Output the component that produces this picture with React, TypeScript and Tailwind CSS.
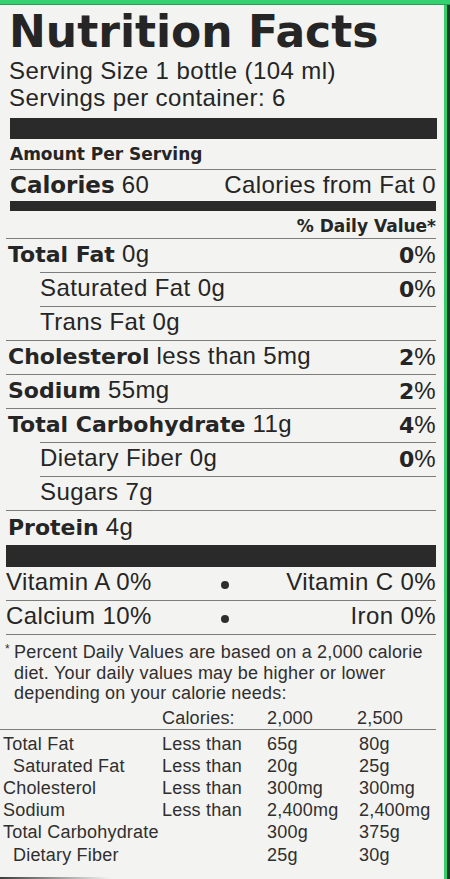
import React from 'react';

const sans = "font-['Liberation_Sans',Arial,sans-serif] tracking-[0.4px]";
const heavy = "font-['DejaVu_Sans',Verdana,sans-serif] font-bold tracking-normal";

type Nutrient = {
  label: string;
  amount: string;
  dv?: string;
  indent?: boolean;
  rule: 'full' | 'indent' | 'none';
};

const nutrients: Nutrient[] = [
  { label: 'Total Fat', amount: '0g', dv: '0', rule: 'indent' },
  { label: 'Saturated Fat', amount: '0g', dv: '0', indent: true, rule: 'indent' },
  { label: 'Trans Fat', amount: '0g', indent: true, rule: 'full' },
  { label: 'Cholesterol', amount: 'less than 5mg', dv: '2', rule: 'full' },
  { label: 'Sodium', amount: '55mg', dv: '2', rule: 'full' },
  { label: 'Total Carbohydrate', amount: '11g', dv: '4', rule: 'indent' },
  { label: 'Dietary Fiber', amount: '0g', dv: '0', indent: true, rule: 'indent' },
  { label: 'Sugars', amount: '7g', indent: true, rule: 'full' },
  { label: 'Protein', amount: '4g', rule: 'none' },
];

const limits = [
  { name: 'Total Fat', less: 'Less than', a: '65g', b: '80g' },
  { name: 'Saturated Fat', less: 'Less than', a: '20g', b: '25g', sub: true },
  { name: 'Cholesterol', less: 'Less than', a: '300mg', b: '300mg' },
  { name: 'Sodium', less: 'Less than', a: '2,400mg', b: '2,400mg' },
  { name: 'Total Carbohydrate', less: '', a: '300g', b: '375g' },
  { name: 'Dietary Fiber', less: '', a: '25g', b: '30g', sub: true },
];

function NutrientRow({ n }: { n: Nutrient }) {
  return (
    <div className="flex h-[34px] flex-col">
      <div className={`flex flex-1 items-center justify-between pb-[3px] ${n.indent ? 'pl-[34px]' : 'pl-[2px]'}`}>
        <p className={`${sans} text-[24px] leading-none`}>
          {n.indent ? n.label : <span className={`${heavy} text-[22px]`}>{n.label}</span>} {n.amount}
        </p>
        {n.dv && (
          <p className="text-[24px] leading-none">
            <span className={`${heavy} text-[22px]`}>{n.dv}</span>
            <span className={sans}>%</span>
          </p>
        )}
      </div>
      {n.rule !== 'none' && (
        <div className={`h-px bg-[#7c7c7c] ${n.rule === 'indent' ? 'ml-[34px]' : ''}`} />
      )}
    </div>
  );
}

function VitaminRow({ left, right }: { left: string; right: string }) {
  return (
    <div className="flex h-[34px] flex-col">
      <div className={`${sans} grid flex-1 grid-cols-[215px_12px_1fr] items-center pb-[4px] text-[24px] leading-none`}>
        <span>{left}</span>
        <span className="mt-[6px] h-[8px] w-[8px] rounded-full bg-[#2e2e2e]" />
        <span className="text-right">{right}</span>
      </div>
      <div className="h-px bg-[#7c7c7c]" />
    </div>
  );
}

export default function App() {
  return (
    <div className="flex h-[879px] w-[450px] flex-col overflow-hidden bg-[#f3f3f1] text-[#252525]">
      <div className="h-[4px] bg-[#35d06f]" />
      <div className="h-px bg-[#23a052]" />
      <div className="flex flex-1">
        <main className="flex flex-1 flex-col pr-[8px]">
          <section className="pl-[10px]">
            <h1 className={`${heavy} mt-[5px] -ml-[1px] text-[44px] leading-[44px]`}>Nutrition Facts</h1>
            <div className={`${sans} mt-[3px] -ml-[1px] text-[24px] leading-[27px]`}>
              <p>Serving Size 1 bottle (104 ml)</p>
              <p>Servings per container: 6</p>
            </div>
            <div className="mt-[7px] mr-[-1px] h-[21px] bg-[#2a2a2a]" />
            <div className="flex h-[31px] flex-col">
              <p className={`${heavy} flex flex-1 items-center text-[17px] leading-none`}>Amount Per Serving</p>
              <div className="h-px bg-[#7c7c7c]" />
            </div>
            <div className="flex h-[31px] items-center justify-between pb-[2px]">
              <p className={`${sans} text-[24px] leading-none`}>
                <span className={`${heavy} text-[23px]`}>Calories</span> 60
              </p>
              <p className={`${sans} text-[24px] leading-none`}>Calories from Fat 0</p>
            </div>
            <div className="h-[10px] bg-[#2a2a2a]" />
          </section>

          <section className="pl-[6px]">
            <div className="flex h-[28px] flex-col">
              <p className={`${heavy} flex flex-1 items-center justify-end pt-[4px] text-[17px] leading-none`}>
                % Daily Value*
              </p>
              <div className="h-px bg-[#7c7c7c]" />
            </div>
            {nutrients.map((n) => (
              <NutrientRow key={n.label} n={n} />
            ))}
            <div className="h-[22px] bg-[#2a2a2a]" />
            <VitaminRow left="Vitamin A 0%" right="Vitamin C 0%" />
            <VitaminRow left="Calcium 10%" right="Iron 0%" />
          </section>

          <section className="flex flex-1 flex-col font-['Liberation_Sans',Arial,sans-serif] tracking-[0.2px] text-[#2f2f2f]">
            <div className="flex pt-[7px] pl-[5px]">
              <span className="w-[9px] pt-[1px] text-[12px] leading-none">*</span>
              <p className="flex-1 text-[18px] leading-[20.5px]">
                Percent Daily Values are based on a 2,000 calorie diet. Your daily values may be higher or lower
                depending on your calorie needs:
              </p>
            </div>
            <div className="mt-[3px] grid h-[23px] grid-cols-[159px_105px_90px_1fr] items-center border-b border-[#7c7c7c] pl-[3px] text-[18px] leading-none">
              <span />
              <span>Calories:</span>
              <span>2,000</span>
              <span>2,500</span>
            </div>
            <div className="pt-[3px] pl-[3px]">
              {limits.map((r) => (
                <div
                  key={r.name}
                  className="grid h-[22.2px] grid-cols-[159px_105px_92px_1fr] items-center text-[18px] leading-none"
                >
                  <span className={r.sub ? 'pl-[10px]' : ''}>{r.name}</span>
                  <span>{r.less}</span>
                  <span>{r.a}</span>
                  <span>{r.b}</span>
                </div>
              ))}
            </div>
            <div className="mt-auto -mr-[8px] h-[2px] w-[110px] bg-linear-to-r from-[#3c3c3c] to-transparent" />
          </section>
        </main>
        <div className="w-[3px] bg-[#33cf6c]" />
        <div className="w-[3px] bg-[#1d3a27]" />
      </div>
    </div>
  );
}
